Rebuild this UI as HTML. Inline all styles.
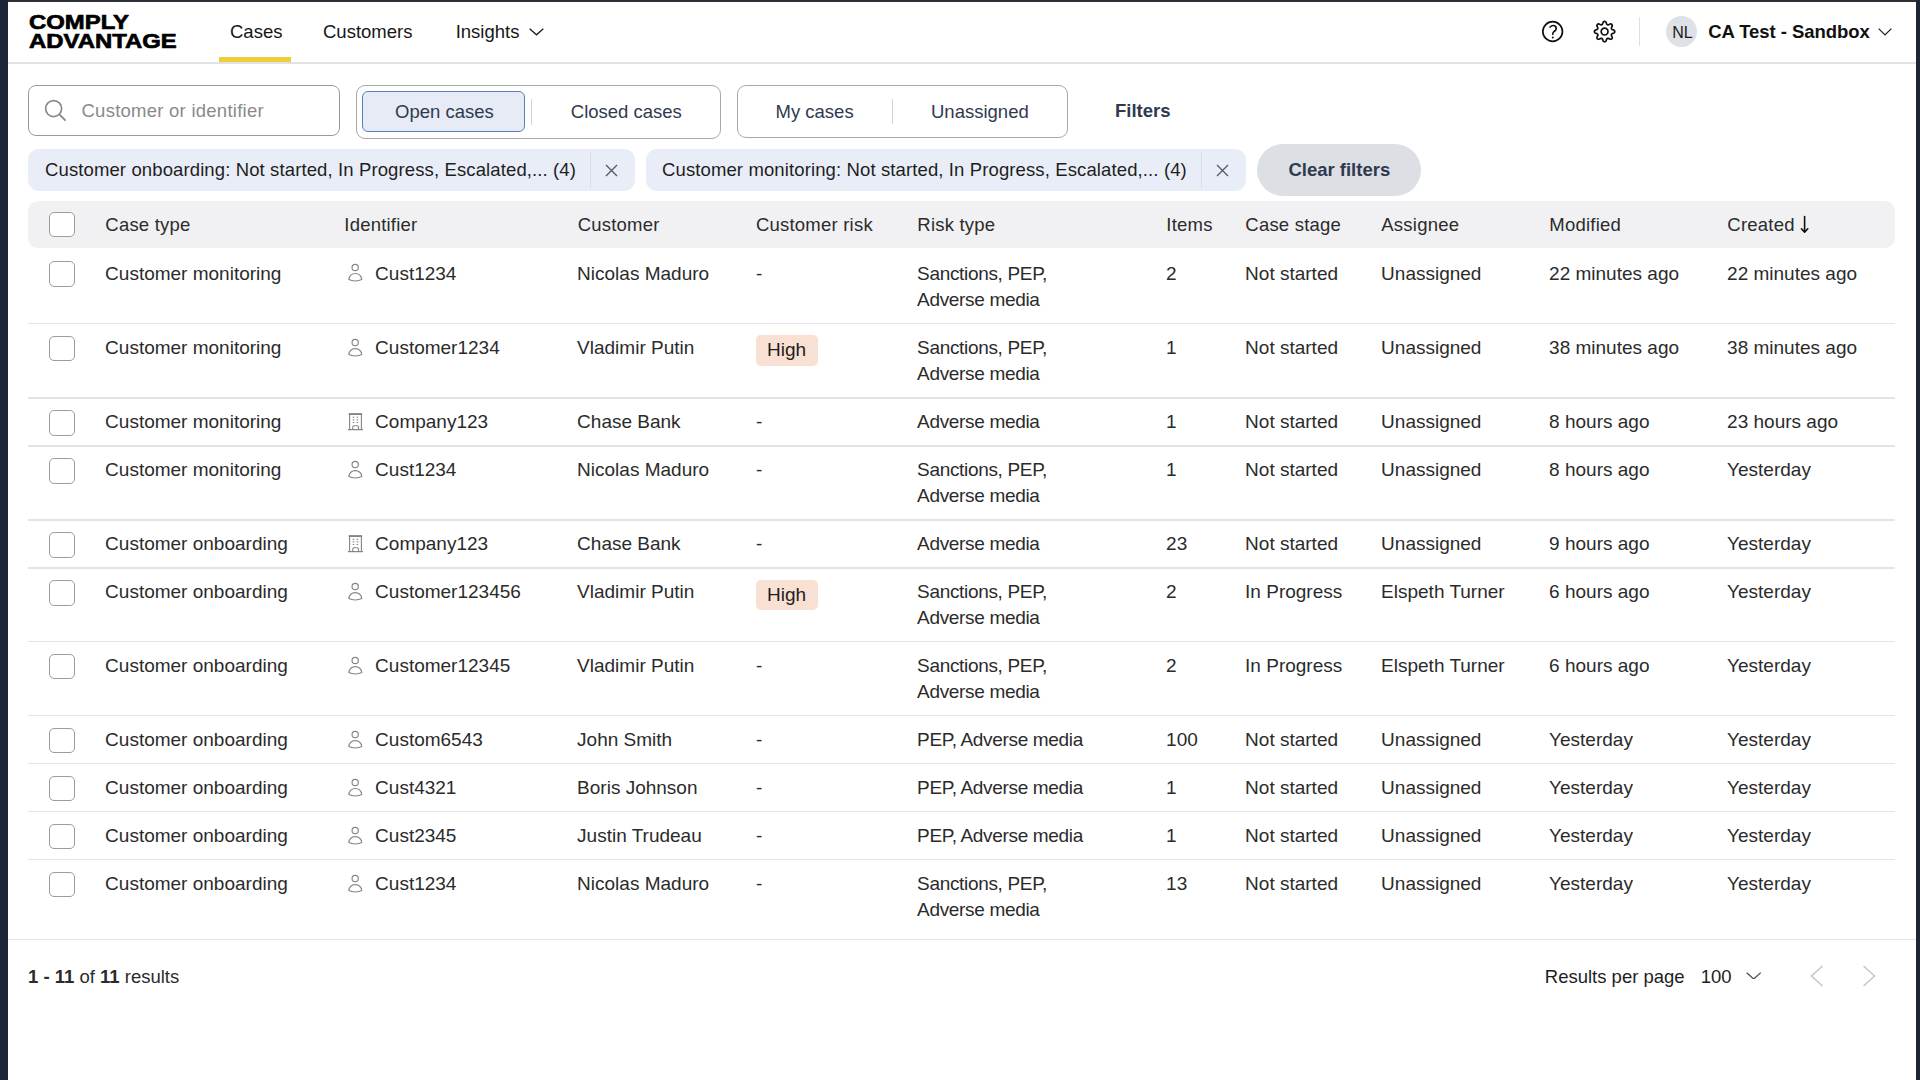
<!DOCTYPE html>
<html><head><meta charset="utf-8"><style>
html,body{margin:0;padding:0;}
body{width:1920px;height:1080px;overflow:hidden;background:#fff;position:relative;font-family:'Liberation Sans', sans-serif;}
.t{position:absolute;white-space:nowrap;line-height:1;font-family:'Liberation Sans', sans-serif;}
.r{position:absolute;}
.logo{font-weight:700;font-size:21px;line-height:18.8px;color:#000;transform:scaleX(1.137);transform-origin:0 0;-webkit-text-stroke:0.7px #000;letter-spacing:0px;}
</style></head><body>
<div class="r" style="left:0px;top:0px;width:1920px;height:2px;background:#2c3038;"></div>
<div class="r" style="left:0px;top:0px;width:7.5px;height:1080px;background:#1c2636;"></div>
<div class="r" style="left:1916px;top:0px;width:4px;height:1080px;background:#1c2636;"></div>
<div class="r" style="left:7.5px;top:62px;width:1908.5px;height:1.5px;background:#e2e2e2;"></div>
<div class="r" style="left:219px;top:57px;width:72px;height:5px;background:#ebd03a;"></div>
<div class="t logo" style="left:29px;top:12.6px;">COMPLY</div>
<div class="t logo" style="left:29px;top:31.6px;">ADVANTAGE</div>
<div class="t" style="left:230px;top:22.80px;font-size:18.5px;color:#161616;">Cases</div>
<div class="t" style="left:323px;top:23.20px;font-size:18.5px;color:#161616;">Customers</div>
<div class="t" style="left:455.7px;top:23.20px;font-size:18.5px;color:#161616;">Insights</div>
<svg class="r" style="left:528.8px;top:28.3px;" width="15" height="7.5" viewBox="0 0 15 7.5"><polyline points="0.675,0.675 7.5,6.825 14.325,0.675" fill="none" stroke="#222" stroke-width="1.35"/></svg>
<svg class="r" style="left:1541px;top:20px;" width="24" height="24" viewBox="0 0 24 24"><circle cx="11.65" cy="11.5" r="9.8" fill="none" stroke="#111" stroke-width="1.7"/><path d="M9.1 7.1C10 6 11 5.5 12.1 5.5C13.9 5.5 15.2 6.8 15.2 8.4C15.2 10 14 10.9 13 11.5C12.2 12 11.8 12.8 11.8 14.3" fill="none" stroke="#111" stroke-width="1.65" stroke-linecap="round"/><circle cx="11.8" cy="17.4" r="1" fill="#111"/></svg>
<svg class="r" style="left:1592px;top:19px;" width="26" height="26" viewBox="0 0 26 26"><path d="M22.75,12.60 L22.73,12.87 L22.68,13.13 L22.58,13.39 L22.42,13.63 L22.19,13.86 L21.86,14.07 L21.45,14.24 L21.01,14.39 L20.60,14.52 L20.26,14.65 L20.00,14.79 L19.82,14.94 L19.68,15.11 L19.57,15.27 L19.48,15.45 L19.42,15.64 L19.37,15.83 L19.36,16.04 L19.39,16.28 L19.47,16.57 L19.61,16.90 L19.81,17.28 L20.02,17.70 L20.18,18.11 L20.27,18.49 L20.28,18.82 L20.21,19.10 L20.10,19.35 L19.95,19.58 L19.78,19.78 L19.58,19.95 L19.35,20.10 L19.10,20.21 L18.82,20.28 L18.49,20.27 L18.11,20.18 L17.70,20.02 L17.28,19.81 L16.90,19.61 L16.57,19.47 L16.28,19.39 L16.04,19.36 L15.83,19.37 L15.64,19.42 L15.45,19.48 L15.27,19.57 L15.11,19.68 L14.94,19.82 L14.79,20.00 L14.65,20.26 L14.52,20.60 L14.39,21.01 L14.24,21.45 L14.07,21.86 L13.86,22.19 L13.63,22.42 L13.39,22.58 L13.13,22.68 L12.87,22.73 L12.60,22.75 L12.33,22.73 L12.07,22.68 L11.81,22.58 L11.57,22.42 L11.34,22.19 L11.13,21.86 L10.96,21.45 L10.81,21.01 L10.68,20.60 L10.55,20.26 L10.41,20.00 L10.26,19.82 L10.09,19.68 L9.93,19.57 L9.75,19.48 L9.56,19.42 L9.37,19.37 L9.16,19.36 L8.92,19.39 L8.63,19.47 L8.30,19.61 L7.92,19.81 L7.50,20.02 L7.09,20.18 L6.71,20.27 L6.38,20.28 L6.10,20.21 L5.85,20.10 L5.62,19.95 L5.42,19.78 L5.25,19.58 L5.10,19.35 L4.99,19.10 L4.92,18.82 L4.93,18.49 L5.02,18.11 L5.18,17.70 L5.39,17.28 L5.59,16.90 L5.73,16.57 L5.81,16.28 L5.84,16.04 L5.83,15.83 L5.78,15.64 L5.72,15.45 L5.63,15.27 L5.52,15.11 L5.38,14.94 L5.20,14.79 L4.94,14.65 L4.60,14.52 L4.19,14.39 L3.75,14.24 L3.34,14.07 L3.01,13.86 L2.78,13.63 L2.62,13.39 L2.52,13.13 L2.47,12.87 L2.45,12.60 L2.47,12.33 L2.52,12.07 L2.62,11.81 L2.78,11.57 L3.01,11.34 L3.34,11.13 L3.75,10.96 L4.19,10.81 L4.60,10.68 L4.94,10.55 L5.20,10.41 L5.38,10.26 L5.52,10.09 L5.63,9.93 L5.72,9.75 L5.78,9.56 L5.83,9.37 L5.84,9.16 L5.81,8.92 L5.73,8.63 L5.59,8.30 L5.39,7.92 L5.18,7.50 L5.02,7.09 L4.93,6.71 L4.92,6.38 L4.99,6.10 L5.10,5.85 L5.25,5.62 L5.42,5.42 L5.62,5.25 L5.85,5.10 L6.10,4.99 L6.38,4.92 L6.71,4.93 L7.09,5.02 L7.50,5.18 L7.92,5.39 L8.30,5.59 L8.63,5.73 L8.92,5.81 L9.16,5.84 L9.37,5.83 L9.56,5.78 L9.75,5.72 L9.93,5.63 L10.09,5.52 L10.26,5.38 L10.41,5.20 L10.55,4.94 L10.68,4.60 L10.81,4.19 L10.96,3.75 L11.13,3.34 L11.34,3.01 L11.57,2.78 L11.81,2.62 L12.07,2.52 L12.33,2.47 L12.60,2.45 L12.87,2.47 L13.13,2.52 L13.39,2.62 L13.63,2.78 L13.86,3.01 L14.07,3.34 L14.24,3.75 L14.39,4.19 L14.52,4.60 L14.65,4.94 L14.79,5.20 L14.94,5.38 L15.11,5.52 L15.27,5.63 L15.45,5.72 L15.64,5.78 L15.83,5.83 L16.04,5.84 L16.28,5.81 L16.57,5.73 L16.90,5.59 L17.28,5.39 L17.70,5.18 L18.11,5.02 L18.49,4.93 L18.82,4.92 L19.10,4.99 L19.35,5.10 L19.58,5.25 L19.78,5.42 L19.95,5.62 L20.10,5.85 L20.21,6.10 L20.28,6.38 L20.27,6.71 L20.18,7.09 L20.02,7.50 L19.81,7.92 L19.61,8.30 L19.47,8.63 L19.39,8.92 L19.36,9.16 L19.37,9.37 L19.42,9.56 L19.48,9.75 L19.57,9.93 L19.68,10.09 L19.82,10.26 L20.00,10.41 L20.26,10.55 L20.60,10.68 L21.01,10.81 L21.45,10.96 L21.86,11.13 L22.19,11.34 L22.42,11.57 L22.58,11.81 L22.68,12.07 L22.73,12.33Z" fill="none" stroke="#111" stroke-width="1.7" stroke-linejoin="round"/><circle cx="12.6" cy="12.6" r="3.4" fill="none" stroke="#111" stroke-width="1.7"/></svg>
<div class="r" style="left:1639px;top:17.3px;width:1.2px;height:29px;background:#e0e0e0;"></div>
<div class="r" style="left:1666px;top:16.2px;width:31px;height:31px;background:#dfe1e6;border-radius:50%;"></div>
<div class="t" style="left:1672.3px;top:24.60px;font-size:16px;color:#1a1a1a;">NL</div>
<div class="t" style="left:1708.2px;top:22.90px;font-size:18.5px;color:#111;font-weight:700;letter-spacing:-0.05px;">CA Test - Sandbox</div>
<svg class="r" style="left:1877.8px;top:28px;" width="14" height="7.5" viewBox="0 0 14 7.5"><polyline points="0.65,0.65 7.0,6.85 13.35,0.65" fill="none" stroke="#222" stroke-width="1.3"/></svg>
<div class="r" style="left:28.3px;top:84.5px;width:311.3px;height:51px;border:1.5px solid #9a9a9a;border-radius:8px;box-sizing:border-box;"></div>
<svg class="r" style="left:44px;top:99px;" width="24" height="24" viewBox="0 0 24 24"><circle cx="9.6" cy="9.6" r="8" fill="none" stroke="#8a8a8a" stroke-width="1.7"/><line x1="15.3" y1="15.3" x2="21" y2="21" stroke="#8a8a8a" stroke-width="1.8" stroke-linecap="round"/></svg>
<div class="t" style="left:81.5px;top:101.60px;font-size:18.5px;color:#8a8a8a;letter-spacing:0.25px;">Customer or identifier</div>
<div class="r" style="left:356px;top:84.5px;width:365px;height:54px;border:1.5px solid #a8a8a8;border-radius:9px;box-sizing:border-box;"></div>
<div class="r" style="left:362.3px;top:91.3px;width:163px;height:40.6px;border:1.5px solid #5a7fc0;border-radius:6px;background:#e6ebf6;box-sizing:border-box;"></div>
<div class="r" style="left:530.5px;top:99px;width:1.5px;height:25.5px;background:#d4d4d4;"></div>
<div class="t" style="left:395px;top:103.20px;font-size:18.5px;color:#2f3a4f;">Open cases</div>
<div class="t" style="left:570.8px;top:103.20px;font-size:18.5px;color:#2f3a4f;">Closed cases</div>
<div class="r" style="left:736.7px;top:84.7px;width:331.3px;height:53.7px;border:1.5px solid #a8a8a8;border-radius:9px;box-sizing:border-box;"></div>
<div class="r" style="left:891.7px;top:99px;width:1.5px;height:25px;background:#d4d4d4;"></div>
<div class="t" style="left:775.5px;top:103.20px;font-size:18.5px;color:#2f3a4f;">My cases</div>
<div class="t" style="left:931px;top:103.20px;font-size:18.5px;color:#2f3a4f;">Unassigned</div>
<div class="t" style="left:1115px;top:102.00px;font-size:18.5px;color:#2f3a4f;font-weight:700;">Filters</div>
<div class="r" style="left:28.3px;top:149.3px;width:606.7px;height:41.4px;background:#e9edf7;border-radius:11px;"></div>
<div class="t" style="left:45px;top:161.20px;font-size:18.5px;color:#1e1e1e;letter-spacing:0.12px;">Customer onboarding: Not started, In Progress, Escalated,... (4)</div>
<div class="r" style="left:590.2px;top:152px;width:1px;height:36px;background:#d9dce6;"></div>
<svg class="r" style="left:604.9px;top:164.3px;" width="13" height="13" viewBox="0 0 13 13"><path d="M1 1L12 12M12 1L1 12" stroke="#555c68" stroke-width="1.35" fill="none"/></svg>
<div class="r" style="left:646px;top:149.3px;width:600px;height:41.4px;background:#e9edf7;border-radius:11px;"></div>
<div class="t" style="left:662px;top:161.20px;font-size:18.5px;color:#1e1e1e;letter-spacing:0.12px;">Customer monitoring: Not started, In Progress, Escalated,... (4)</div>
<div class="r" style="left:1201px;top:152px;width:1px;height:36px;background:#d9dce6;"></div>
<svg class="r" style="left:1216.0px;top:164.3px;" width="13" height="13" viewBox="0 0 13 13"><path d="M1 1L12 12M12 1L1 12" stroke="#555c68" stroke-width="1.35" fill="none"/></svg>
<div class="r" style="left:1257px;top:144px;width:164px;height:51.5px;background:#dcdfe4;border-radius:26px;"></div>
<div class="t" style="left:1288.4px;top:161.20px;font-size:18.5px;color:#2f3a4f;font-weight:700;">Clear filters</div>
<div class="r" style="left:28.3px;top:201px;width:1866.7px;height:46.8px;background:#f1f1f3;border-radius:10px;"></div>
<div class="r" style="left:49.2px;top:211.5px;width:25.6px;height:25.6px;border:1.6px solid #9c9c9c;border-radius:5px;background:#fff;box-sizing:border-box;"></div>
<svg class="r" style="left:1798px;top:214px;" width="14" height="21" viewBox="0 0 14 21"><path d="M6.6 2.6V17.8M3.4 14.8L6.6 18.1L9.8 14.8" fill="none" stroke="#111" stroke-width="1.6" stroke-linecap="round" stroke-linejoin="round"/></svg>
<div class="t" style="left:105.3px;top:216.00px;font-size:18.5px;color:#2b2b2b;letter-spacing:0.22px;">Case type</div>
<div class="t" style="left:344.3px;top:216.00px;font-size:18.5px;color:#2b2b2b;letter-spacing:0.22px;">Identifier</div>
<div class="t" style="left:577.6999999999999px;top:216.00px;font-size:18.5px;color:#2b2b2b;letter-spacing:0.22px;">Customer</div>
<div class="t" style="left:755.9px;top:216.00px;font-size:18.5px;color:#2b2b2b;letter-spacing:0.22px;">Customer risk</div>
<div class="t" style="left:917.3px;top:216.00px;font-size:18.5px;color:#2b2b2b;letter-spacing:0.22px;">Risk type</div>
<div class="t" style="left:1166.3px;top:216.00px;font-size:18.5px;color:#2b2b2b;letter-spacing:0.22px;">Items</div>
<div class="t" style="left:1245.3px;top:216.00px;font-size:18.5px;color:#2b2b2b;letter-spacing:0.22px;">Case stage</div>
<div class="t" style="left:1381.3px;top:216.00px;font-size:18.5px;color:#2b2b2b;letter-spacing:0.22px;">Assignee</div>
<div class="t" style="left:1549.3px;top:216.00px;font-size:18.5px;color:#2b2b2b;letter-spacing:0.22px;">Modified</div>
<div class="t" style="left:1727.3px;top:216.00px;font-size:18.5px;color:#2b2b2b;letter-spacing:0.22px;">Created</div>
<div class="r" style="left:49.2px;top:261.2px;width:25.6px;height:25.6px;border:1.6px solid #9c9c9c;border-radius:5px;background:#fff;box-sizing:border-box;"></div>
<div class="t" style="left:105.1px;top:263.60px;font-size:19px;color:#2b2b2b;">Customer monitoring</div>
<svg class="r" style="left:343px;top:259.2px;" width="25" height="28" viewBox="0 0 25 28"><circle cx="12.2" cy="8.5" r="3.15" fill="none" stroke="#858585" stroke-width="1.15"/><path d="M5.8 20.6C6.3 17 8.8 14.55 12.3 14.55C15.8 14.55 18.3 17 18.8 20.6C16.8 21.6 14.6 22 12.3 22C10 22 7.8 21.6 5.8 20.6Z" fill="none" stroke="#858585" stroke-width="1.15" stroke-linejoin="round"/></svg>
<div class="t" style="left:375.1px;top:263.60px;font-size:19px;color:#2b2b2b;">Cust1234</div>
<div class="t" style="left:577.1px;top:263.60px;font-size:19px;color:#2b2b2b;">Nicolas Maduro</div>
<div class="t" style="left:756.1px;top:263.60px;font-size:19px;color:#2b2b2b;">-</div>
<div class="t" style="left:917.1px;top:263.60px;font-size:19px;color:#2b2b2b;letter-spacing:-0.33px;">Sanctions, PEP,</div>
<div class="t" style="left:917.1px;top:289.60px;font-size:19px;color:#2b2b2b;letter-spacing:-0.33px;">Adverse media</div>
<div class="t" style="left:1166.1px;top:263.60px;font-size:19px;color:#2b2b2b;">2</div>
<div class="t" style="left:1245.1px;top:263.60px;font-size:19px;color:#2b2b2b;">Not started</div>
<div class="t" style="left:1381.1px;top:263.60px;font-size:19px;color:#2b2b2b;">Unassigned</div>
<div class="t" style="left:1549.1px;top:263.60px;font-size:19px;color:#2b2b2b;">22 minutes ago</div>
<div class="t" style="left:1727.1px;top:263.60px;font-size:19px;color:#2b2b2b;">22 minutes ago</div>
<div class="r" style="left:49.2px;top:335.5px;width:25.6px;height:25.6px;border:1.6px solid #9c9c9c;border-radius:5px;background:#fff;box-sizing:border-box;"></div>
<div class="t" style="left:105.1px;top:337.90px;font-size:19px;color:#2b2b2b;">Customer monitoring</div>
<svg class="r" style="left:343px;top:333.5px;" width="25" height="28" viewBox="0 0 25 28"><circle cx="12.2" cy="8.5" r="3.15" fill="none" stroke="#858585" stroke-width="1.15"/><path d="M5.8 20.6C6.3 17 8.8 14.55 12.3 14.55C15.8 14.55 18.3 17 18.8 20.6C16.8 21.6 14.6 22 12.3 22C10 22 7.8 21.6 5.8 20.6Z" fill="none" stroke="#858585" stroke-width="1.15" stroke-linejoin="round"/></svg>
<div class="t" style="left:375.1px;top:337.90px;font-size:19px;color:#2b2b2b;">Customer1234</div>
<div class="t" style="left:577.1px;top:337.90px;font-size:19px;color:#2b2b2b;">Vladimir Putin</div>
<div class="r" style="left:756px;top:335.0px;width:61.6px;height:30.6px;background:#f8e0d3;border-radius:5px;"></div>
<div class="t" style="left:767.1px;top:340.10px;font-size:19px;color:#1e1e1e;">High</div>
<div class="t" style="left:917.1px;top:337.90px;font-size:19px;color:#2b2b2b;letter-spacing:-0.33px;">Sanctions, PEP,</div>
<div class="t" style="left:917.1px;top:363.90px;font-size:19px;color:#2b2b2b;letter-spacing:-0.33px;">Adverse media</div>
<div class="t" style="left:1166.1px;top:337.90px;font-size:19px;color:#2b2b2b;">1</div>
<div class="t" style="left:1245.1px;top:337.90px;font-size:19px;color:#2b2b2b;">Not started</div>
<div class="t" style="left:1381.1px;top:337.90px;font-size:19px;color:#2b2b2b;">Unassigned</div>
<div class="t" style="left:1549.1px;top:337.90px;font-size:19px;color:#2b2b2b;">38 minutes ago</div>
<div class="t" style="left:1727.1px;top:337.90px;font-size:19px;color:#2b2b2b;">38 minutes ago</div>
<div class="r" style="left:49.2px;top:410.0px;width:25.6px;height:25.6px;border:1.6px solid #9c9c9c;border-radius:5px;background:#fff;box-sizing:border-box;"></div>
<div class="t" style="left:105.1px;top:412.40px;font-size:19px;color:#2b2b2b;">Customer monitoring</div>
<svg class="r" style="left:343px;top:408.0px;" width="25" height="28" viewBox="0 0 25 28"><rect x="5.7" y="5.1" width="13.5" height="1.9" fill="#858585"/><path d="M6.6 21.6V6.5M18.4 21.6V6.5" stroke="#858585" stroke-width="1.1" fill="none"/><path d="M4.9 21.6H20" stroke="#858585" stroke-width="1.25"/><path d="M9.75 21.6V18.9Q9.75 17.75 10.9 17.75H14.35Q15.5 17.75 15.5 18.9V21.6" stroke="#858585" stroke-width="1.1" fill="none"/><g fill="#858585"><rect x="9.7" y="8.7" width="1.6" height="1.1"/><rect x="13.6" y="8.7" width="1.6" height="1.1"/><rect x="9.7" y="11.3" width="1.6" height="1.1"/><rect x="13.6" y="11.3" width="1.6" height="1.1"/><rect x="9.7" y="13.9" width="1.6" height="1.1"/><rect x="13.6" y="13.9" width="1.6" height="1.1"/></g></svg>
<div class="t" style="left:375.1px;top:412.40px;font-size:19px;color:#2b2b2b;">Company123</div>
<div class="t" style="left:577.1px;top:412.40px;font-size:19px;color:#2b2b2b;">Chase Bank</div>
<div class="t" style="left:756.1px;top:412.40px;font-size:19px;color:#2b2b2b;">-</div>
<div class="t" style="left:917.1px;top:412.40px;font-size:19px;color:#2b2b2b;letter-spacing:-0.33px;">Adverse media</div>
<div class="t" style="left:1166.1px;top:412.40px;font-size:19px;color:#2b2b2b;">1</div>
<div class="t" style="left:1245.1px;top:412.40px;font-size:19px;color:#2b2b2b;">Not started</div>
<div class="t" style="left:1381.1px;top:412.40px;font-size:19px;color:#2b2b2b;">Unassigned</div>
<div class="t" style="left:1549.1px;top:412.40px;font-size:19px;color:#2b2b2b;">8 hours ago</div>
<div class="t" style="left:1727.1px;top:412.40px;font-size:19px;color:#2b2b2b;">23 hours ago</div>
<div class="r" style="left:49.2px;top:458.0px;width:25.6px;height:25.6px;border:1.6px solid #9c9c9c;border-radius:5px;background:#fff;box-sizing:border-box;"></div>
<div class="t" style="left:105.1px;top:460.40px;font-size:19px;color:#2b2b2b;">Customer monitoring</div>
<svg class="r" style="left:343px;top:456.0px;" width="25" height="28" viewBox="0 0 25 28"><circle cx="12.2" cy="8.5" r="3.15" fill="none" stroke="#858585" stroke-width="1.15"/><path d="M5.8 20.6C6.3 17 8.8 14.55 12.3 14.55C15.8 14.55 18.3 17 18.8 20.6C16.8 21.6 14.6 22 12.3 22C10 22 7.8 21.6 5.8 20.6Z" fill="none" stroke="#858585" stroke-width="1.15" stroke-linejoin="round"/></svg>
<div class="t" style="left:375.1px;top:460.40px;font-size:19px;color:#2b2b2b;">Cust1234</div>
<div class="t" style="left:577.1px;top:460.40px;font-size:19px;color:#2b2b2b;">Nicolas Maduro</div>
<div class="t" style="left:756.1px;top:460.40px;font-size:19px;color:#2b2b2b;">-</div>
<div class="t" style="left:917.1px;top:460.40px;font-size:19px;color:#2b2b2b;letter-spacing:-0.33px;">Sanctions, PEP,</div>
<div class="t" style="left:917.1px;top:486.40px;font-size:19px;color:#2b2b2b;letter-spacing:-0.33px;">Adverse media</div>
<div class="t" style="left:1166.1px;top:460.40px;font-size:19px;color:#2b2b2b;">1</div>
<div class="t" style="left:1245.1px;top:460.40px;font-size:19px;color:#2b2b2b;">Not started</div>
<div class="t" style="left:1381.1px;top:460.40px;font-size:19px;color:#2b2b2b;">Unassigned</div>
<div class="t" style="left:1549.1px;top:460.40px;font-size:19px;color:#2b2b2b;">8 hours ago</div>
<div class="t" style="left:1727.1px;top:460.40px;font-size:19px;color:#2b2b2b;">Yesterday</div>
<div class="r" style="left:49.2px;top:532.0px;width:25.6px;height:25.6px;border:1.6px solid #9c9c9c;border-radius:5px;background:#fff;box-sizing:border-box;"></div>
<div class="t" style="left:105.1px;top:534.40px;font-size:19px;color:#2b2b2b;">Customer onboarding</div>
<svg class="r" style="left:343px;top:530.0px;" width="25" height="28" viewBox="0 0 25 28"><rect x="5.7" y="5.1" width="13.5" height="1.9" fill="#858585"/><path d="M6.6 21.6V6.5M18.4 21.6V6.5" stroke="#858585" stroke-width="1.1" fill="none"/><path d="M4.9 21.6H20" stroke="#858585" stroke-width="1.25"/><path d="M9.75 21.6V18.9Q9.75 17.75 10.9 17.75H14.35Q15.5 17.75 15.5 18.9V21.6" stroke="#858585" stroke-width="1.1" fill="none"/><g fill="#858585"><rect x="9.7" y="8.7" width="1.6" height="1.1"/><rect x="13.6" y="8.7" width="1.6" height="1.1"/><rect x="9.7" y="11.3" width="1.6" height="1.1"/><rect x="13.6" y="11.3" width="1.6" height="1.1"/><rect x="9.7" y="13.9" width="1.6" height="1.1"/><rect x="13.6" y="13.9" width="1.6" height="1.1"/></g></svg>
<div class="t" style="left:375.1px;top:534.40px;font-size:19px;color:#2b2b2b;">Company123</div>
<div class="t" style="left:577.1px;top:534.40px;font-size:19px;color:#2b2b2b;">Chase Bank</div>
<div class="t" style="left:756.1px;top:534.40px;font-size:19px;color:#2b2b2b;">-</div>
<div class="t" style="left:917.1px;top:534.40px;font-size:19px;color:#2b2b2b;letter-spacing:-0.33px;">Adverse media</div>
<div class="t" style="left:1166.1px;top:534.40px;font-size:19px;color:#2b2b2b;">23</div>
<div class="t" style="left:1245.1px;top:534.40px;font-size:19px;color:#2b2b2b;">Not started</div>
<div class="t" style="left:1381.1px;top:534.40px;font-size:19px;color:#2b2b2b;">Unassigned</div>
<div class="t" style="left:1549.1px;top:534.40px;font-size:19px;color:#2b2b2b;">9 hours ago</div>
<div class="t" style="left:1727.1px;top:534.40px;font-size:19px;color:#2b2b2b;">Yesterday</div>
<div class="r" style="left:49.2px;top:580.0px;width:25.6px;height:25.6px;border:1.6px solid #9c9c9c;border-radius:5px;background:#fff;box-sizing:border-box;"></div>
<div class="t" style="left:105.1px;top:582.40px;font-size:19px;color:#2b2b2b;">Customer onboarding</div>
<svg class="r" style="left:343px;top:578.0px;" width="25" height="28" viewBox="0 0 25 28"><circle cx="12.2" cy="8.5" r="3.15" fill="none" stroke="#858585" stroke-width="1.15"/><path d="M5.8 20.6C6.3 17 8.8 14.55 12.3 14.55C15.8 14.55 18.3 17 18.8 20.6C16.8 21.6 14.6 22 12.3 22C10 22 7.8 21.6 5.8 20.6Z" fill="none" stroke="#858585" stroke-width="1.15" stroke-linejoin="round"/></svg>
<div class="t" style="left:375.1px;top:582.40px;font-size:19px;color:#2b2b2b;">Customer123456</div>
<div class="t" style="left:577.1px;top:582.40px;font-size:19px;color:#2b2b2b;">Vladimir Putin</div>
<div class="r" style="left:756px;top:579.5px;width:61.6px;height:30.6px;background:#f8e0d3;border-radius:5px;"></div>
<div class="t" style="left:767.1px;top:584.60px;font-size:19px;color:#1e1e1e;">High</div>
<div class="t" style="left:917.1px;top:582.40px;font-size:19px;color:#2b2b2b;letter-spacing:-0.33px;">Sanctions, PEP,</div>
<div class="t" style="left:917.1px;top:608.40px;font-size:19px;color:#2b2b2b;letter-spacing:-0.33px;">Adverse media</div>
<div class="t" style="left:1166.1px;top:582.40px;font-size:19px;color:#2b2b2b;">2</div>
<div class="t" style="left:1245.1px;top:582.40px;font-size:19px;color:#2b2b2b;">In Progress</div>
<div class="t" style="left:1381.1px;top:582.40px;font-size:19px;color:#2b2b2b;">Elspeth Turner</div>
<div class="t" style="left:1549.1px;top:582.40px;font-size:19px;color:#2b2b2b;">6 hours ago</div>
<div class="t" style="left:1727.1px;top:582.40px;font-size:19px;color:#2b2b2b;">Yesterday</div>
<div class="r" style="left:49.2px;top:653.9000000000001px;width:25.6px;height:25.6px;border:1.6px solid #9c9c9c;border-radius:5px;background:#fff;box-sizing:border-box;"></div>
<div class="t" style="left:105.1px;top:656.30px;font-size:19px;color:#2b2b2b;">Customer onboarding</div>
<svg class="r" style="left:343px;top:651.9000000000001px;" width="25" height="28" viewBox="0 0 25 28"><circle cx="12.2" cy="8.5" r="3.15" fill="none" stroke="#858585" stroke-width="1.15"/><path d="M5.8 20.6C6.3 17 8.8 14.55 12.3 14.55C15.8 14.55 18.3 17 18.8 20.6C16.8 21.6 14.6 22 12.3 22C10 22 7.8 21.6 5.8 20.6Z" fill="none" stroke="#858585" stroke-width="1.15" stroke-linejoin="round"/></svg>
<div class="t" style="left:375.1px;top:656.30px;font-size:19px;color:#2b2b2b;">Customer12345</div>
<div class="t" style="left:577.1px;top:656.30px;font-size:19px;color:#2b2b2b;">Vladimir Putin</div>
<div class="t" style="left:756.1px;top:656.30px;font-size:19px;color:#2b2b2b;">-</div>
<div class="t" style="left:917.1px;top:656.30px;font-size:19px;color:#2b2b2b;letter-spacing:-0.33px;">Sanctions, PEP,</div>
<div class="t" style="left:917.1px;top:682.30px;font-size:19px;color:#2b2b2b;letter-spacing:-0.33px;">Adverse media</div>
<div class="t" style="left:1166.1px;top:656.30px;font-size:19px;color:#2b2b2b;">2</div>
<div class="t" style="left:1245.1px;top:656.30px;font-size:19px;color:#2b2b2b;">In Progress</div>
<div class="t" style="left:1381.1px;top:656.30px;font-size:19px;color:#2b2b2b;">Elspeth Turner</div>
<div class="t" style="left:1549.1px;top:656.30px;font-size:19px;color:#2b2b2b;">6 hours ago</div>
<div class="t" style="left:1727.1px;top:656.30px;font-size:19px;color:#2b2b2b;">Yesterday</div>
<div class="r" style="left:49.2px;top:727.9000000000001px;width:25.6px;height:25.6px;border:1.6px solid #9c9c9c;border-radius:5px;background:#fff;box-sizing:border-box;"></div>
<div class="t" style="left:105.1px;top:730.30px;font-size:19px;color:#2b2b2b;">Customer onboarding</div>
<svg class="r" style="left:343px;top:725.9000000000001px;" width="25" height="28" viewBox="0 0 25 28"><circle cx="12.2" cy="8.5" r="3.15" fill="none" stroke="#858585" stroke-width="1.15"/><path d="M5.8 20.6C6.3 17 8.8 14.55 12.3 14.55C15.8 14.55 18.3 17 18.8 20.6C16.8 21.6 14.6 22 12.3 22C10 22 7.8 21.6 5.8 20.6Z" fill="none" stroke="#858585" stroke-width="1.15" stroke-linejoin="round"/></svg>
<div class="t" style="left:375.1px;top:730.30px;font-size:19px;color:#2b2b2b;">Custom6543</div>
<div class="t" style="left:577.1px;top:730.30px;font-size:19px;color:#2b2b2b;">John Smith</div>
<div class="t" style="left:756.1px;top:730.30px;font-size:19px;color:#2b2b2b;">-</div>
<div class="t" style="left:917.1px;top:730.30px;font-size:19px;color:#2b2b2b;letter-spacing:-0.33px;">PEP, Adverse media</div>
<div class="t" style="left:1166.1px;top:730.30px;font-size:19px;color:#2b2b2b;">100</div>
<div class="t" style="left:1245.1px;top:730.30px;font-size:19px;color:#2b2b2b;">Not started</div>
<div class="t" style="left:1381.1px;top:730.30px;font-size:19px;color:#2b2b2b;">Unassigned</div>
<div class="t" style="left:1549.1px;top:730.30px;font-size:19px;color:#2b2b2b;">Yesterday</div>
<div class="t" style="left:1727.1px;top:730.30px;font-size:19px;color:#2b2b2b;">Yesterday</div>
<div class="r" style="left:49.2px;top:775.9000000000001px;width:25.6px;height:25.6px;border:1.6px solid #9c9c9c;border-radius:5px;background:#fff;box-sizing:border-box;"></div>
<div class="t" style="left:105.1px;top:778.30px;font-size:19px;color:#2b2b2b;">Customer onboarding</div>
<svg class="r" style="left:343px;top:773.9000000000001px;" width="25" height="28" viewBox="0 0 25 28"><circle cx="12.2" cy="8.5" r="3.15" fill="none" stroke="#858585" stroke-width="1.15"/><path d="M5.8 20.6C6.3 17 8.8 14.55 12.3 14.55C15.8 14.55 18.3 17 18.8 20.6C16.8 21.6 14.6 22 12.3 22C10 22 7.8 21.6 5.8 20.6Z" fill="none" stroke="#858585" stroke-width="1.15" stroke-linejoin="round"/></svg>
<div class="t" style="left:375.1px;top:778.30px;font-size:19px;color:#2b2b2b;">Cust4321</div>
<div class="t" style="left:577.1px;top:778.30px;font-size:19px;color:#2b2b2b;">Boris Johnson</div>
<div class="t" style="left:756.1px;top:778.30px;font-size:19px;color:#2b2b2b;">-</div>
<div class="t" style="left:917.1px;top:778.30px;font-size:19px;color:#2b2b2b;letter-spacing:-0.33px;">PEP, Adverse media</div>
<div class="t" style="left:1166.1px;top:778.30px;font-size:19px;color:#2b2b2b;">1</div>
<div class="t" style="left:1245.1px;top:778.30px;font-size:19px;color:#2b2b2b;">Not started</div>
<div class="t" style="left:1381.1px;top:778.30px;font-size:19px;color:#2b2b2b;">Unassigned</div>
<div class="t" style="left:1549.1px;top:778.30px;font-size:19px;color:#2b2b2b;">Yesterday</div>
<div class="t" style="left:1727.1px;top:778.30px;font-size:19px;color:#2b2b2b;">Yesterday</div>
<div class="r" style="left:49.2px;top:823.9000000000001px;width:25.6px;height:25.6px;border:1.6px solid #9c9c9c;border-radius:5px;background:#fff;box-sizing:border-box;"></div>
<div class="t" style="left:105.1px;top:826.30px;font-size:19px;color:#2b2b2b;">Customer onboarding</div>
<svg class="r" style="left:343px;top:821.9000000000001px;" width="25" height="28" viewBox="0 0 25 28"><circle cx="12.2" cy="8.5" r="3.15" fill="none" stroke="#858585" stroke-width="1.15"/><path d="M5.8 20.6C6.3 17 8.8 14.55 12.3 14.55C15.8 14.55 18.3 17 18.8 20.6C16.8 21.6 14.6 22 12.3 22C10 22 7.8 21.6 5.8 20.6Z" fill="none" stroke="#858585" stroke-width="1.15" stroke-linejoin="round"/></svg>
<div class="t" style="left:375.1px;top:826.30px;font-size:19px;color:#2b2b2b;">Cust2345</div>
<div class="t" style="left:577.1px;top:826.30px;font-size:19px;color:#2b2b2b;">Justin Trudeau</div>
<div class="t" style="left:756.1px;top:826.30px;font-size:19px;color:#2b2b2b;">-</div>
<div class="t" style="left:917.1px;top:826.30px;font-size:19px;color:#2b2b2b;letter-spacing:-0.33px;">PEP, Adverse media</div>
<div class="t" style="left:1166.1px;top:826.30px;font-size:19px;color:#2b2b2b;">1</div>
<div class="t" style="left:1245.1px;top:826.30px;font-size:19px;color:#2b2b2b;">Not started</div>
<div class="t" style="left:1381.1px;top:826.30px;font-size:19px;color:#2b2b2b;">Unassigned</div>
<div class="t" style="left:1549.1px;top:826.30px;font-size:19px;color:#2b2b2b;">Yesterday</div>
<div class="t" style="left:1727.1px;top:826.30px;font-size:19px;color:#2b2b2b;">Yesterday</div>
<div class="r" style="left:49.2px;top:871.9000000000001px;width:25.6px;height:25.6px;border:1.6px solid #9c9c9c;border-radius:5px;background:#fff;box-sizing:border-box;"></div>
<div class="t" style="left:105.1px;top:874.30px;font-size:19px;color:#2b2b2b;">Customer onboarding</div>
<svg class="r" style="left:343px;top:869.9000000000001px;" width="25" height="28" viewBox="0 0 25 28"><circle cx="12.2" cy="8.5" r="3.15" fill="none" stroke="#858585" stroke-width="1.15"/><path d="M5.8 20.6C6.3 17 8.8 14.55 12.3 14.55C15.8 14.55 18.3 17 18.8 20.6C16.8 21.6 14.6 22 12.3 22C10 22 7.8 21.6 5.8 20.6Z" fill="none" stroke="#858585" stroke-width="1.15" stroke-linejoin="round"/></svg>
<div class="t" style="left:375.1px;top:874.30px;font-size:19px;color:#2b2b2b;">Cust1234</div>
<div class="t" style="left:577.1px;top:874.30px;font-size:19px;color:#2b2b2b;">Nicolas Maduro</div>
<div class="t" style="left:756.1px;top:874.30px;font-size:19px;color:#2b2b2b;">-</div>
<div class="t" style="left:917.1px;top:874.30px;font-size:19px;color:#2b2b2b;letter-spacing:-0.33px;">Sanctions, PEP,</div>
<div class="t" style="left:917.1px;top:900.30px;font-size:19px;color:#2b2b2b;letter-spacing:-0.33px;">Adverse media</div>
<div class="t" style="left:1166.1px;top:874.30px;font-size:19px;color:#2b2b2b;">13</div>
<div class="t" style="left:1245.1px;top:874.30px;font-size:19px;color:#2b2b2b;">Not started</div>
<div class="t" style="left:1381.1px;top:874.30px;font-size:19px;color:#2b2b2b;">Unassigned</div>
<div class="t" style="left:1549.1px;top:874.30px;font-size:19px;color:#2b2b2b;">Yesterday</div>
<div class="t" style="left:1727.1px;top:874.30px;font-size:19px;color:#2b2b2b;">Yesterday</div>
<div class="r" style="left:28.3px;top:322.55px;width:1866.7px;height:1.5px;background:#e4e4e4;"></div>
<div class="r" style="left:28.3px;top:397.05px;width:1866.7px;height:1.5px;background:#e4e4e4;"></div>
<div class="r" style="left:28.3px;top:445.05px;width:1866.7px;height:1.5px;background:#e4e4e4;"></div>
<div class="r" style="left:28.3px;top:519.05px;width:1866.7px;height:1.5px;background:#e4e4e4;"></div>
<div class="r" style="left:28.3px;top:567.05px;width:1866.7px;height:1.5px;background:#e4e4e4;"></div>
<div class="r" style="left:28.3px;top:640.95px;width:1866.7px;height:1.5px;background:#e4e4e4;"></div>
<div class="r" style="left:28.3px;top:714.95px;width:1866.7px;height:1.5px;background:#e4e4e4;"></div>
<div class="r" style="left:28.3px;top:762.95px;width:1866.7px;height:1.5px;background:#e4e4e4;"></div>
<div class="r" style="left:28.3px;top:810.95px;width:1866.7px;height:1.5px;background:#e4e4e4;"></div>
<div class="r" style="left:28.3px;top:858.95px;width:1866.7px;height:1.5px;background:#e4e4e4;"></div>
<div class="r" style="left:7.5px;top:938.5px;width:1908.5px;height:1.5px;background:#e4e4e4;"></div>
<div class="t" style="left:28px;top:967.50px;font-size:18.5px;color:#2b2b2b;"><b>1 - 11</b> of <b>11</b> results</div>
<div class="t" style="left:1544.8px;top:968.00px;font-size:18.5px;color:#1e1e1e;">Results per page</div>
<div class="t" style="left:1700.8px;top:968.00px;font-size:18.5px;color:#1e1e1e;">100</div>
<svg class="r" style="left:1746px;top:971.8px;" width="15.4" height="7.7" viewBox="0 0 15.4 7.7"><polyline points="0.7,0.7 7.7,7.0 14.700000000000001,0.7" fill="none" stroke="#555" stroke-width="1.4"/></svg>
<svg class="r" style="left:1810px;top:965px;" width="14" height="22" viewBox="0 0 14 22"><polyline points="12.5,1 1.5,11 12.5,21" fill="none" stroke="#c8c8c8" stroke-width="1.6"/></svg>
<svg class="r" style="left:1862px;top:965px;" width="14" height="22" viewBox="0 0 14 22"><polyline points="1.5,1 12.5,11 1.5,21" fill="none" stroke="#c8c8c8" stroke-width="1.6"/></svg>
</body></html>
